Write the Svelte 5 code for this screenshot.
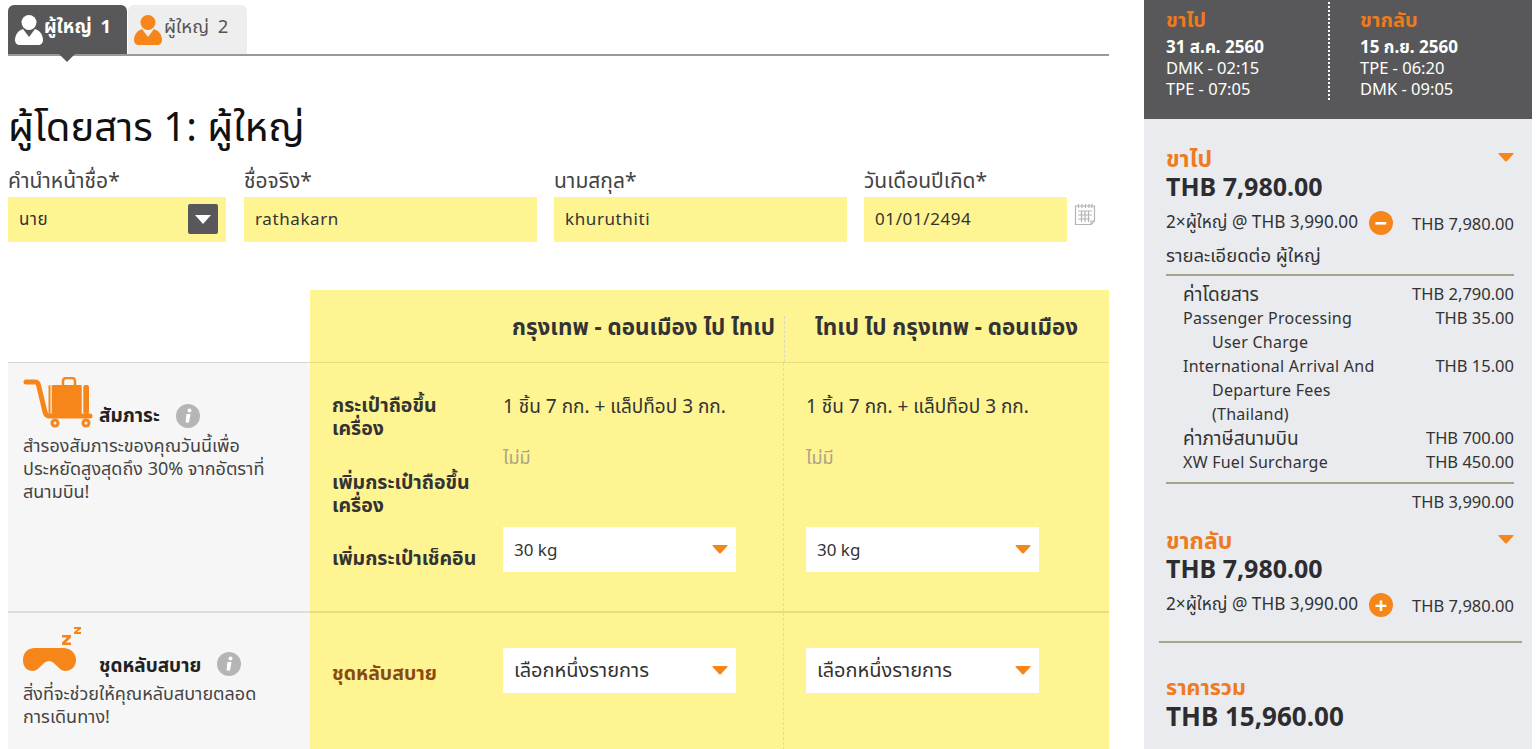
<script>
  const fields = [
    { label: "ชื่อจริง*", value: "rathakarn", cls: "name" },
    { label: "นามสกุล*", value: "khuruthiti", cls: "name" }
  ];
  const fees = [
    { name: "ค่าโดยสาร", th: true, price: "THB 2,790.00" },
    { name: "Passenger Processing", sub: ["User Charge"], price: "THB 35.00" },
    { name: "International Arrival And", sub: ["Departure Fees", "(Thailand)"], price: "THB 15.00" },
    { name: "ค่าภาษีสนามบิน", th: true, price: "THB 700.00" },
    { name: "XW Fuel Surcharge", price: "THB 450.00" }
  ];
</script>

{#snippet person(color, notch)}
  <svg class="person" viewBox="0 0 28 30" width="28" height="30">
    <path d="M8 14 L20 14 C25 15.500 28 20 28 25 C28 28 26 30 23 30 L5 30 C2 30 0 28 0 25 C0 20 3 15.500 8 14 Z" fill={color} />
    <path d="M8 14 L20 14 L14 22 Z" fill={notch} />
    <circle cx="14" cy="7.500" r="7.500" fill={color} />
  </svg>
{/snippet}

{#snippet caret()}
  <svg class="caret" viewBox="0 0 16 9" width="16" height="9"><path d="M0.500 1 Q0 0 1.500 0 L14.500 0 Q16 0 15.500 1 L8.800 8.200 Q8 9 7.200 8.200 Z" fill="#f7861a" /></svg>
{/snippet}

{#snippet info()}
  <svg class="info" viewBox="0 0 24 24" width="24" height="24">
    <circle cx="12" cy="12" r="12" fill="#b5b5b5" />
    <circle cx="13.500" cy="6.500" r="2" fill="#fff" />
    <path d="M10.500 10 L14.500 10 L13 18.500 L9.500 18.500 Z" fill="#fff" />
  </svg>
{/snippet}

{#snippet pick(text, th)}
  <div class="pick" class:th><span>{text}</span>{@render caret()}</div>
{/snippet}

<div class="page">
  <main class="main">
    <nav class="tabs">
      <div class="tab active">{@render person("#fff", "#58585a")}<span>ผู้ใหญ่ 1</span></div>
      <div class="tab">{@render person("#f7861a", "#eee")}<span>ผู้ใหญ่ 2</span></div>
    </nav>

    <h1>ผู้โดยสาร 1: ผู้ใหญ่</h1>

    <div class="form">
      <div class="field title">
        <div class="lab">คำนำหน้าชื่อ*</div>
        <div class="input">นาย<span class="drop"><i></i></span></div>
      </div>
      {#each fields as f}
        <div class="field {f.cls}">
          <div class="lab">{f.label}</div>
          <div class="input">{f.value}</div>
        </div>
      {/each}
      <div class="field dob">
        <div class="lab">วันเดือนปีเกิด*</div>
        <div class="input">01/01/2494</div>
      </div>
      <svg class="cal" viewBox="0 0 22 24" width="22" height="24" fill="none" stroke="#b4b4b4" stroke-width="1.200">
        <path d="M1.500 4 H20.500 V19 L17 22.500 H1.500 Z" />
        <path d="M17 22.500 V19 H20.500" />
        <path d="M4.500 2 V6 M8 2 V6 M11.500 2 V6 M15 2 V6 M18 2 V6" />
        <path d="M4 9 H18 M4 13 H18 M4 17 H16 M7.500 9 V20 M11 9 V20 M14.500 9 V20" />
      </svg>
    </div>

    <section class="extras">
      <div class="corner"></div>
      <div class="head-cell"><h2>กรุงเทพ - ดอนเมือง ไป ไทเป</h2><h2 class="second">ไทเป ไป กรุงเทพ - ดอนเมือง</h2></div>

      <div class="side s1">
        <div class="side-title">
          <svg class="bag" viewBox="0 0 70 52" width="70" height="52" fill="#f7861a">
            <path d="M3 5 H12 C14 5 15 6 15.500 8 L22 35 C22.500 37 24 39 26 39 H67" fill="none" stroke="#f7861a" stroke-width="5" stroke-linecap="round" />
            <path d="M40 8 V4 C40 2 41 1 43 1 H49 C51 1 52 2 52 4 V8" fill="none" stroke="#f7861a" stroke-width="2.500" />
            <rect x="25.500" y="8" width="2" height="29" rx="1" />
            <rect x="28.700" y="8" width="30" height="29" rx="1" />
            <rect x="60.300" y="8" width="5.700" height="29" rx="2" />
            <circle cx="32" cy="46" r="4.500" /><circle cx="32" cy="46" r="1.500" fill="#f6f6f6" />
            <circle cx="63" cy="46" r="4.500" /><circle cx="63" cy="46" r="1.500" fill="#f6f6f6" />
          </svg>
          <b class="t1">สัมภาระ</b>
          {@render info()}
        </div>
        <p>สำรองสัมภาระของคุณวันนี้เพื่อ<br />ประหยัดสูงสุดถึง 30% จากอัตราที่<br />สนามบิน!</p>
      </div>
      <div class="cols r1">
        <div class="rlabels">
          <b>กระเป๋าถือขึ้น<br />เครื่อง</b>
          <b>เพิ่มกระเป๋าถือขึ้น<br />เครื่อง</b>
          <b>เพิ่มกระเป๋าเช็คอิน</b>
        </div>
        {#each [0, 1] as i}
          <div class="col" class:right={i === 1}>
            <div class="allow">1 ชิ้น 7 กก. + แล็ปท็อป 3 กก.</div>
            <div class="none">ไม่มี</div>
            {@render pick("30 kg", false)}
          </div>
        {/each}
      </div>

      <div class="side s2">
        <div class="side-title">
          <svg class="mask" viewBox="0 0 60 50" width="60" height="50" fill="#f7861a">
            <path d="M12 21 H40 C48 21 53 26 53 33 C53 40 48 44 42 44 C36 44 32 34 26 34 C20 34 16 44 10 44 C4 44 0 40 0 33 C0 26 4 21 12 21 Z" />
            <path d="M39 8 H48 V10.500 L43 15.500 H48 V18 H39 V15.500 L44 10.500 H39 Z" />
            <path d="M51 0 H58 V2 L54 5 H58 V7 H51 V5 L55 2 H51 Z" />
          </svg>
          <b class="t2">ชุดหลับสบาย</b>
          {@render info()}
        </div>
        <p>สิ่งที่จะช่วยให้คุณหลับสบายตลอด<br />การเดินทาง!</p>
      </div>
      <div class="cols r2">
        <div class="rlabels"><b class="brown">ชุดหลับสบาย</b></div>
        {#each [0, 1] as i}
          <div class="col" class:right={i === 1}>{@render pick("เลือกหนึ่งรายการ", true)}</div>
        {/each}
      </div>
    </section>
  </main>

  <aside class="aside">
    <div class="flight">
      <div class="leg">
        <b class="o">ขาไป</b>
        <b class="date">31 ส.ค. 2560</b>
        <span>DMK - 02:15</span>
        <span>TPE - 07:05</span>
      </div>
      <div class="leg back">
        <b class="o">ขากลับ</b>
        <b class="date">15 ก.ย. 2560</b>
        <span>TPE - 06:20</span>
        <span>DMK - 09:05</span>
      </div>
    </div>

    <div class="summary">
      <div class="block">
        <div class="sum-head"><b class="o">ขาไป</b>{@render caret()}</div>
        <div class="amount">THB 7,980.00</div>
        <div class="line">
          <span class="calc">2×ผู้ใหญ่ @ THB 3,990.00</span>
          <span class="round">&minus;</span>
          <span class="price">THB 7,980.00</span>
        </div>
        <div class="detail">รายละเอียดต่อ ผู้ใหญ่</div>
        <div class="fees">
          {#each fees as fee}
            <div class="fee">
              <div class:th={fee.th}>
                {fee.name}
                {#each fee.sub ?? [] as s}<div class="sub">{s}</div>{/each}
              </div>
              <span>{fee.price}</span>
            </div>
          {/each}
        </div>
        <div class="total">THB 3,990.00</div>
      </div>

      <div class="block next">
        <div class="sum-head"><b class="o">ขากลับ</b>{@render caret()}</div>
        <div class="amount">THB 7,980.00</div>
        <div class="line">
          <span class="calc">2×ผู้ใหญ่ @ THB 3,990.00</span>
          <span class="round">+</span>
          <span class="price">THB 7,980.00</span>
        </div>
      </div>

      <div class="grand">
        <b class="o">ราคารวม</b>
        <div class="amount">THB 15,960.00</div>
      </div>
    </div>
  </aside>
</div>

<style>
  :global(body) {
    margin: 0;
    background: #fff;
    overflow: hidden;
  }

  .page {
    display: flex;
    width: 1539px;
    height: 749px;
    overflow: hidden;
    font-family: "Noto Sans", "Noto Sans Thai", "DejaVu Sans", sans-serif;
    font-size: 16px;
    color: #333;
  }

  .main {
    width: 1101px;
    margin-left: 8px;
    flex: none;
  }

  .tabs {
    display: flex;
    gap: 1px;
    margin-top: 5px;
    height: 49px;
    border-bottom: 2px solid #999;
  }

  .tab {
    position: relative;
    width: 119px;
    height: 49px;
    box-sizing: border-box;
    padding: 9px 0 0 6px;
    display: flex;
    gap: 2px;
    background: #eee;
    border-radius: 6px 6px 0 0;
    font-size: 18.500px;
    color: #555;
  }

  .tab span {
    line-height: 24px;
    word-spacing: 4px;
    white-space: nowrap;
  }

  .tab.active {
    background: #58585a;
    color: #fff;
    font-weight: 700;
    padding-left: 7px;
    gap: 1px;
  }

  .tab.active::after {
    content: "";
    position: absolute;
    left: 51px;
    top: 49px;
    border: 8px solid transparent;
    border-top-color: #58585a;
    border-bottom: 0;
  }

  .person {
    margin-top: 1px;
    flex: none;
  }

  h1 {
    margin: 45px 0 0;
    font-size: 40px;
    line-height: 50px;
    font-weight: 400;
    color: #111;
    white-space: nowrap;
  }

  .form {
    display: flex;
    margin-top: 14px;
    gap: 18px;
    position: relative;
  }

  .field {
    flex: none;
  }

  .title { width: 218px; }
  .name { width: 293px; }
  .name + .name { margin-left: -1px; }
  .dob { width: 203px; margin-left: -1px; }

  .lab {
    line-height: 30px;
    margin-bottom: 2px;
    font-size: 21px;
    color: #444;
    white-space: nowrap;
  }

  .input {
    position: relative;
    height: 45px;
    line-height: 44px;
    padding-left: 11px;
    background: #fef492;
    font-size: 17px;
    letter-spacing: 0.600px;
    color: #333;
  }

  .drop {
    position: absolute;
    right: 8px;
    top: 7px;
    width: 30px;
    height: 30px;
    border-radius: 2px;
    background: #58585a;
  }

  .drop i {
    position: absolute;
    left: 7px;
    top: 11px;
    border: 8px solid transparent;
    border-top: 9px solid #fff;
    border-bottom: 0;
  }

  .cal {
    position: absolute;
    left: 1066px;
    top: 37px;
  }

  .extras {
    display: grid;
    grid-template-columns: 302px 799px;
    grid-template-rows: 73px 250px 137px;
    margin-top: 48px;
  }

  .corner {
    border-bottom: 1px solid #d8d8d8;
  }

  .head-cell {
    position: relative;
    display: flex;
    background: #fef492;
    border-bottom: 1px solid #e8dc82;
    box-sizing: border-box;
  }

  h2 {
    margin: 0;
    width: 473px;
    padding-left: 202px;
    box-sizing: border-box;
    line-height: 74px;
    font-size: 22.400px;
    font-weight: 700;
    color: #333;
    white-space: nowrap;
  }

  h2.second {
    width: 326px;
    padding-left: 32px;
  }

  .head-cell::after {
    content: "";
    position: absolute;
    left: 474px;
    top: 26px;
    bottom: 0;
    border-left: 1px dashed #d9d9c4;
  }

  .side {
    background: #f6f6f6;
    padding: 14px 0 0 15px;
  }

  .s1 { border-bottom: 2px solid #ddd; }

  .side-title {
    display: flex;
    align-items: flex-end;
  }

  .side-title b {
    font-size: 19px;
    line-height: 28px;
    color: #222;
    white-space: nowrap;
  }

  .t1 { margin-left: 6px; }
  .side-title .t2 { margin-left: 16px; line-height: 24px; }

  .info {
    margin-left: 16px;
    margin-bottom: 1px;
  }

  .side p {
    margin: 5px 0 0;
    font-size: 18px;
    line-height: 23px;
    color: #444;
    white-space: nowrap;
  }

  .cols {
    display: grid;
    grid-template-columns: 193px 280px 326px;
    background: #fef492;
  }

  .r1 { border-bottom: 2px solid #e8dc82; }

  .rlabels {
    display: flex;
    flex-direction: column;
    padding: 30px 0 0 22px;
  }

  .rlabels b {
    font-size: 19.500px;
    line-height: 23px;
    color: #333;
    white-space: nowrap;
  }

  .rlabels b:nth-child(2) { margin-top: 31px; }
  .rlabels b:nth-child(3) { margin-top: 30px; }

  .rlabels b.brown { color: #8a4b12; }

  .col {
    position: relative;
    padding-top: 32px;
  }

  .col.right {
    padding-left: 22px;
    border-left: 1px dashed #d9d9c4;
  }

  .allow {
    line-height: 22px;
    font-size: 19px;
    color: #333;
    white-space: nowrap;
  }

  .none {
    margin-top: 29px;
    line-height: 22px;
    font-size: 18px;
    color: #a9a585;
  }

  .pick {
    display: flex;
    align-items: center;
    justify-content: space-between;
    width: 233px;
    height: 45px;
    box-sizing: border-box;
    padding: 0 8px 0 11px;
    background: #fff;
    font-size: 17px;
    color: #333;
    margin-top: 59px;
  }

  .pick.th { font-size: 20px; }

  .r2 .rlabels { padding-top: 48px; }
  .r2 .col { padding-top: 35px; }
  .r2 .pick { margin-top: 0; }

  .aside {
    width: 388px;
    margin-left: 35px;
    flex: none;
  }

  .flight {
    display: flex;
    height: 119px;
    box-sizing: border-box;
    padding-top: 9px;
    background: #58585a;
    color: #fff;
  }

  .leg {
    width: 162px;
    padding-left: 22px;
    display: flex;
    flex-direction: column;
    font-size: 16.500px;
    line-height: 21px;
    height: 91px;
  }

  .leg .o {
    font-size: 20px;
    line-height: 22px;
  }

  .date {
    margin-top: 5px;
    font-size: 17px;
    white-space: nowrap;
  }

  .leg.back {
    width: auto;
    padding-left: 30px;
    border-left: 2px dotted #fff;
    margin-top: -7px;
    padding-top: 7px;
  }

  .o {
    color: #ee7b1e;
  }

  .summary {
    background: #e9ebee;
    height: 630px;
    padding: 26px 10px 0 15px;
    box-sizing: border-box;
  }

  .block {
    padding: 0 8px 0 7px;
    color: #333;
  }

  .sum-head {
    display: flex;
    justify-content: space-between;
    align-items: flex-start;
    font-size: 23px;
    line-height: 26px;
  }

  .sum-head .caret {
    margin-top: 8px;
  }

  .amount {
    font-size: 25px;
    line-height: 30px;
    font-weight: 700;
    color: #2d2d2f;
  }

  .line {
    display: flex;
    align-items: center;
    margin-top: 7px;
    height: 30px;
    white-space: nowrap;
  }

  .calc {
    width: 203px;
    flex: none;
    font-size: 17.200px;
  }

  .price {
    margin-left: auto;
    font-size: 16.500px;
  }

  .round {
    width: 24px;
    height: 24px;
    border-radius: 50%;
    background: #f7861a;
    color: #fff;
    font-weight: 700;
    font-size: 22px;
    line-height: 23px;
    text-align: center;
    flex: none;
  }

  .detail {
    margin-top: 2px;
    line-height: 30px;
    border-bottom: 2px solid #a5a58d;
    font-size: 18.500px;
    padding-bottom: 4px;
  }

  .fees {
    padding: 6px 0 8px 17px;
    border-bottom: 2px solid #a5a58d;
    font-size: 16px;
    letter-spacing: 0.250px;
    line-height: 24px;
  }

  .fees .th {
    font-size: 19px;
    letter-spacing: 0;
  }

  .fee {
    display: flex;
    justify-content: space-between;
    white-space: nowrap;
  }

  .fee span {
    font-size: 16.500px;
    letter-spacing: 0;
  }

  .sub {
    padding-left: 29px;
  }

  .total {
    text-align: right;
    line-height: 36px;
    font-size: 16.500px;
  }

  .next {
    margin-top: 7px;
    padding-bottom: 21px;
    border-bottom: 2px solid #a5a58d;
  }

  .grand {
    padding: 31px 0 0 7px;
  }

  .grand b {
    display: block;
    font-size: 21.500px;
    line-height: 26px;
  }

  .grand .amount {
    font-size: 26px;
    line-height: 32px;
  }
</style>
